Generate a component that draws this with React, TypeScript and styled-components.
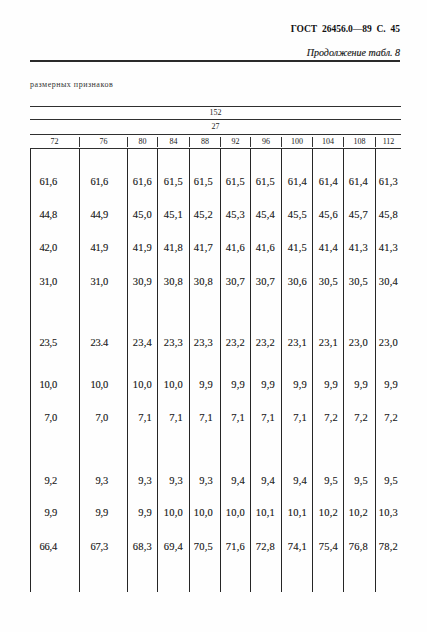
import React from 'react'
import styled, { createGlobalStyle } from 'styled-components'

const GlobalStyle = createGlobalStyle`
  html, body {
    margin: 0;
    padding: 0;
    background: #fefefe;
  }
  body {
    font-family: 'Liberation Serif', 'Times New Roman', serif;
    color: #151515;
  }
`

type SizeColumn = {
  size: string
  values: string[]
}

const columns: SizeColumn[] = [
  { size: '72', values: ['61,6', '44,8', '42,0', '31,0', '23,5', '10,0', '7,0', '9,2', '9,9', '66,4'] },
  { size: '76', values: ['61,6', '44,9', '41,9', '31,0', '23.4', '10,0', '7,0', '9,3', '9,9', '67,3'] },
  { size: '80', values: ['61,6', '45,0', '41,9', '30,9', '23,4', '10,0', '7,1', '9,3', '9,9', '68,3'] },
  { size: '84', values: ['61,5', '45,1', '41,8', '30,8', '23,3', '10,0', '7,1', '9,3', '10,0', '69,4'] },
  { size: '88', values: ['61,5', '45,2', '41,7', '30,8', '23,3', '9,9', '7,1', '9,3', '10,0', '70,5'] },
  { size: '92', values: ['61,5', '45,3', '41,6', '30,7', '23,2', '9,9', '7,1', '9,4', '10,0', '71,6'] },
  { size: '96', values: ['61,5', '45,4', '41,6', '30,7', '23,2', '9,9', '7,1', '9,4', '10,1', '72,8'] },
  { size: '100', values: ['61,4', '45,5', '41,5', '30,6', '23,1', '9,9', '7,1', '9,4', '10,1', '74,1'] },
  { size: '104', values: ['61,4', '45,6', '41,4', '30,5', '23,1', '9,9', '7,2', '9,5', '10,2', '75,4'] },
  { size: '108', values: ['61,4', '45,7', '41,3', '30,5', '23,0', '9,9', '7,2', '9,5', '10,2', '76,8'] },
  { size: '112', values: ['61,3', '45,8', '41,3', '30,4', '23,0', '9,9', '7,2', '9,5', '10,3', '78,2'] }
]

// width of each column (px) and right inset of its numbers
const colWidths = [49, 48, 30, 32, 31, 30, 31, 31, 31, 32, 26]
const colInsets = [22, 19, 5, 6, 7, 5, 6, 5, 5, 7, 3]

// space above each data row, groups are split by larger gaps
const rowGaps = [27, 21, 21, 22, 49, 30, 21, 51, 20, 22]

const App: React.FunctionComponent = () => (
  <>
    <GlobalStyle />
    <Page>
      <PageHeader>
        <GostTitle>ГОСТ&nbsp; 26456.0—89&nbsp; С.&nbsp; 45</GostTitle>
        <Continuation>Продолжение табл. 8</Continuation>
      </PageHeader>
      <TopRule />
      <Caption>размерных признаков</Caption>
      <Table>
        <SpanBand $height={12}>152</SpanBand>
        <SpanBand $height={14}>27</SpanBand>
        <HeadRow>
          {columns.map((col, i) => (
            <HeadCell key={col.size} $width={colWidths[i]} $first={i === 0}>
              {col.size}
            </HeadCell>
          ))}
        </HeadRow>
        <Body>
          {columns.map((col, i) => (
            <DataColumn key={col.size} $width={colWidths[i]} $inset={colInsets[i]}>
              {col.values.map((v, r) => (
                <DataCell key={r} $gap={rowGaps[r]} $wide={i < 2}>
                  {v}
                </DataCell>
              ))}
            </DataColumn>
          ))}
        </Body>
      </Table>
    </Page>
  </>
)

const Page = styled.div`
  width: 427px;
  height: 632px;
  box-sizing: border-box;
  padding: 23px 27px 0 30px;
  display: flex;
  flex-direction: column;
`

const PageHeader = styled.div`
  display: flex;
  flex-direction: column;
  align-items: flex-end;
  gap: 12px;
`

const GostTitle = styled.div`
  font-size: 9.5px;
  line-height: 12px;
  font-weight: bold;
  color: #111;
  white-space: nowrap;
`

const Continuation = styled.div`
  font-size: 10px;
  line-height: 12px;
  font-style: italic;
  color: #161616;
  white-space: nowrap;
  -webkit-text-stroke: 0.15px #161616;
`

const TopRule = styled.div`
  margin-top: 1px;
  width: 370px;
  border-top: 2px solid #2a2a2a;
`

const Caption = styled.div`
  margin-top: 18px;
  font-size: 8px;
  line-height: 10px;
  letter-spacing: 0.5px;
  color: #333;
`

const Table = styled.div`
  margin-top: 16px;
  width: 371px;
  border-top: 1px solid #2f2f2f;
  display: flex;
  flex-direction: column;
`

const SpanBand = styled.div<{ $height: number }>`
  height: ${p => p.$height}px;
  line-height: ${p => p.$height}px;
  border-bottom: 1px solid #2f2f2f;
  text-align: center;
  font-size: 8px;
  color: #1e1e1e;
`

const HeadRow = styled.div`
  height: 13px;
  border-bottom: 1px solid #2f2f2f;
  display: flex;
  align-items: center;
`

const HeadCell = styled.div<{ $width: number; $first: boolean }>`
  width: ${p => p.$width}px;
  box-sizing: border-box;
  height: 10px;
  line-height: 10px;
  border-left: ${p => (p.$first ? 'none' : '1px solid #333')};
  text-align: center;
  font-size: 8px;
  color: #222;
`

const Body = styled.div`
  display: flex;
`

const DataColumn = styled.div<{ $width: number; $inset: number }>`
  width: ${p => p.$width}px;
  box-sizing: border-box;
  border-left: 1px solid #262626;
  padding: 0 ${p => p.$inset}px 39px 0;
  display: flex;
  flex-direction: column;
  align-items: flex-end;
`

const DataCell = styled.div<{ $gap: number; $wide: boolean }>`
  margin-top: ${p => p.$gap}px;
  height: 12px;
  line-height: 12px;
  font-size: 10.5px;
  letter-spacing: ${p => (p.$wide ? '-0.2px' : '0.2px')};
  color: #151515;
  -webkit-text-stroke: 0.12px #151515;
  white-space: nowrap;
`

export default App
